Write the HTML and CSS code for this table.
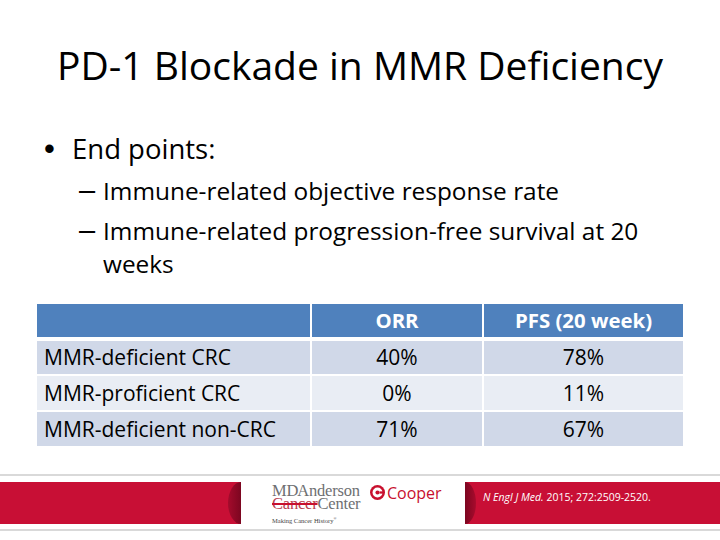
FILE: index.html
```html
<!DOCTYPE html>
<html lang="en">
<head>
<meta charset="utf-8">
<title>PD-1 Blockade in MMR Deficiency</title>
<link rel="stylesheet" href="styles.css">
</head>
<body>
<div class="slide">
  <h1 class="title">PD-1 Blockade in MMR Deficiency</h1>
  <div class="points">
    <div class="l1"><span class="bullet">•</span><span>End points:</span></div>
    <div class="l2 first"><span class="dash">–</span><span class="txt">Immune-related objective response rate</span></div>
    <div class="l2"><span class="dash">–</span><span class="txt">Immune-related progression-free survival at 20 weeks</span></div>
  </div>
  <div class="table">
    <div class="cell hd"></div>
    <div class="cell hd ctr">ORR</div>
    <div class="cell hd ctr">PFS (20 week)</div>

    <div class="cell odd top">MMR-deficient CRC</div>
    <div class="cell odd top ctr">40%</div>
    <div class="cell odd top ctr">78%</div>

    <div class="cell even">MMR-proficient CRC</div>
    <div class="cell even ctr">0%</div>
    <div class="cell even ctr">11%</div>

    <div class="cell odd">MMR-deficient non-CRC</div>
    <div class="cell odd ctr">71%</div>
    <div class="cell odd ctr">67%</div>
  </div>
  <footer class="footer">
    <div class="band band-left"></div>
    <div class="logo">
      <div class="mda">
        <div class="mda1">MD Anderson</div>
        <div class="mda2"><span class="strike">Cancer</span>Center</div>
        <div class="mda3">Making Cancer History<sup>®</sup></div>
      </div>
      <div class="cooper">
        <svg viewBox="0 0 16 16" aria-hidden="true">
          <circle cx="8" cy="8" r="8" fill="#c8102e"/>
          <circle cx="8" cy="8" r="5.3" fill="#fff"/>
          <circle cx="8" cy="8" r="2.2" fill="#c8102e"/>
          <rect x="10.2" y="6.8" width="4" height="2.4" fill="#c8102e"/>
        </svg>
        <span>Cooper</span>
      </div>
    </div>
    <div class="band band-right"><span class="cite"><i>N Engl J Med.</i> 2015; 272:2509-2520.</span></div>
  </footer>
</div>
</body>
</html>
```
FILE: styles.css
```css
html, body {
  margin: 0;
  padding: 0;
  background: #fff;
}

.slide {
  width: 720px;
  height: 540px;
  display: flex;
  flex-direction: column;
  font-family: "Open Sans", "Liberation Sans", sans-serif;
  color: #000;
  overflow: hidden;
}

.title {
  margin: 41px 0 0;
  font-size: 39px;
  font-weight: 400;
  line-height: 48px;
  text-align: center;
}

.points {
  margin-top: 43px;
}

.l1 {
  display: flex;
  align-items: baseline;
  padding-left: 44px;
  font-size: 27.5px;
  line-height: 33px;
}

.bullet {
  width: 28px;
  flex: none;
  font-family: "Liberation Sans", sans-serif;
  font-size: 31px;
}

.l2 {
  display: flex;
  align-items: baseline;
  padding-left: 79px;
  font-size: 24.4px;
  line-height: 33.6px;
  margin-top: 6.4px;
}

.l2.first {
  margin-top: 8.7px;
}

.dash {
  width: 24px;
  flex: none;
  font-family: "Liberation Sans", sans-serif;
  font-size: 29px;
}

.txt {
  width: 570px;
}

.table {
  margin: 23px 0 0 37px;
  display: grid;
  grid-template-columns: 273px 170px 199px;
  grid-template-rows: 33px 35px 34px 34px;
  column-gap: 2px;
  row-gap: 2px;
}

.cell {
  display: flex;
  align-items: center;
  padding: 0 7px;
  font-size: 21px;
  white-space: nowrap;
}

.ctr {
  justify-content: center;
}

.hd {
  background: #4f81bd;
  color: #fff;
  font-weight: 700;
  font-size: 20.4px;
}

.odd {
  background: #d0d8e8;
}

.even {
  background: #e9edf4;
}

.top {
  margin-top: 2px;
}

.footer {
  margin-top: 28px;
  border-top: 2px solid #d9d9d9;
  border-bottom: 2px solid #d9d9d9;
  padding: 6px 0 4px;
  display: flex;
}

.band {
  height: 42px;
  background: #c80f35;
  position: relative;
}

.band-left {
  width: 241px;
  flex: none;
}

.band-left::after {
  content: "";
  position: absolute;
  right: 0;
  top: 0;
  bottom: 0;
  width: 13px;
  border-radius: 100% 0 0 100% / 50% 0 0 50%;
  background: linear-gradient(to right, #a40b2c, #7c0620);
}

.band-right {
  flex: 1;
  display: flex;
  align-items: flex-start;
  padding: 8px 0 0 18px;
  box-sizing: border-box;
  color: #fff;
}

.band-right::before {
  content: "";
  position: absolute;
  left: 0;
  top: 0;
  bottom: 0;
  width: 11px;
  border-radius: 0 100% 100% 0 / 0 50% 50% 0;
  background: linear-gradient(to right, #7c0620, #a80b2d);
}

.cite {
  font-size: 10.5px;
  line-height: 14px;
  white-space: nowrap;
}

.logo {
  width: 224px;
  flex: none;
  display: flex;
  align-items: flex-start;
  gap: 4px;
  padding: 2px 0 0 31px;
  box-sizing: border-box;
}

.mda {
  width: 94px;
  flex: none;
  font-family: "Liberation Serif", serif;
  color: #6e6f72;
}

.mda1,
.mda2 {
  font-size: 16.5px;
  line-height: 13px;
  letter-spacing: -0.2px;
  white-space: nowrap;
}

.mda1 {
  word-spacing: -4px;
}

.strike {
  color: #b9404f;
  text-decoration: line-through;
  text-decoration-color: #c8102e;
  text-decoration-thickness: 1.5px;
}

.mda3 {
  font-size: 6.5px;
  line-height: 8px;
  margin-top: 5px;
  color: #444;
  white-space: nowrap;
}

.mda3 sup {
  font-size: 4px;
}

.cooper {
  display: flex;
  align-items: center;
  gap: 2px;
  margin-top: 1px;
  color: #c8102e;
  font-size: 16px;
  line-height: 16px;
}

.cooper svg {
  width: 15px;
  height: 15px;
  flex: none;
}
```
